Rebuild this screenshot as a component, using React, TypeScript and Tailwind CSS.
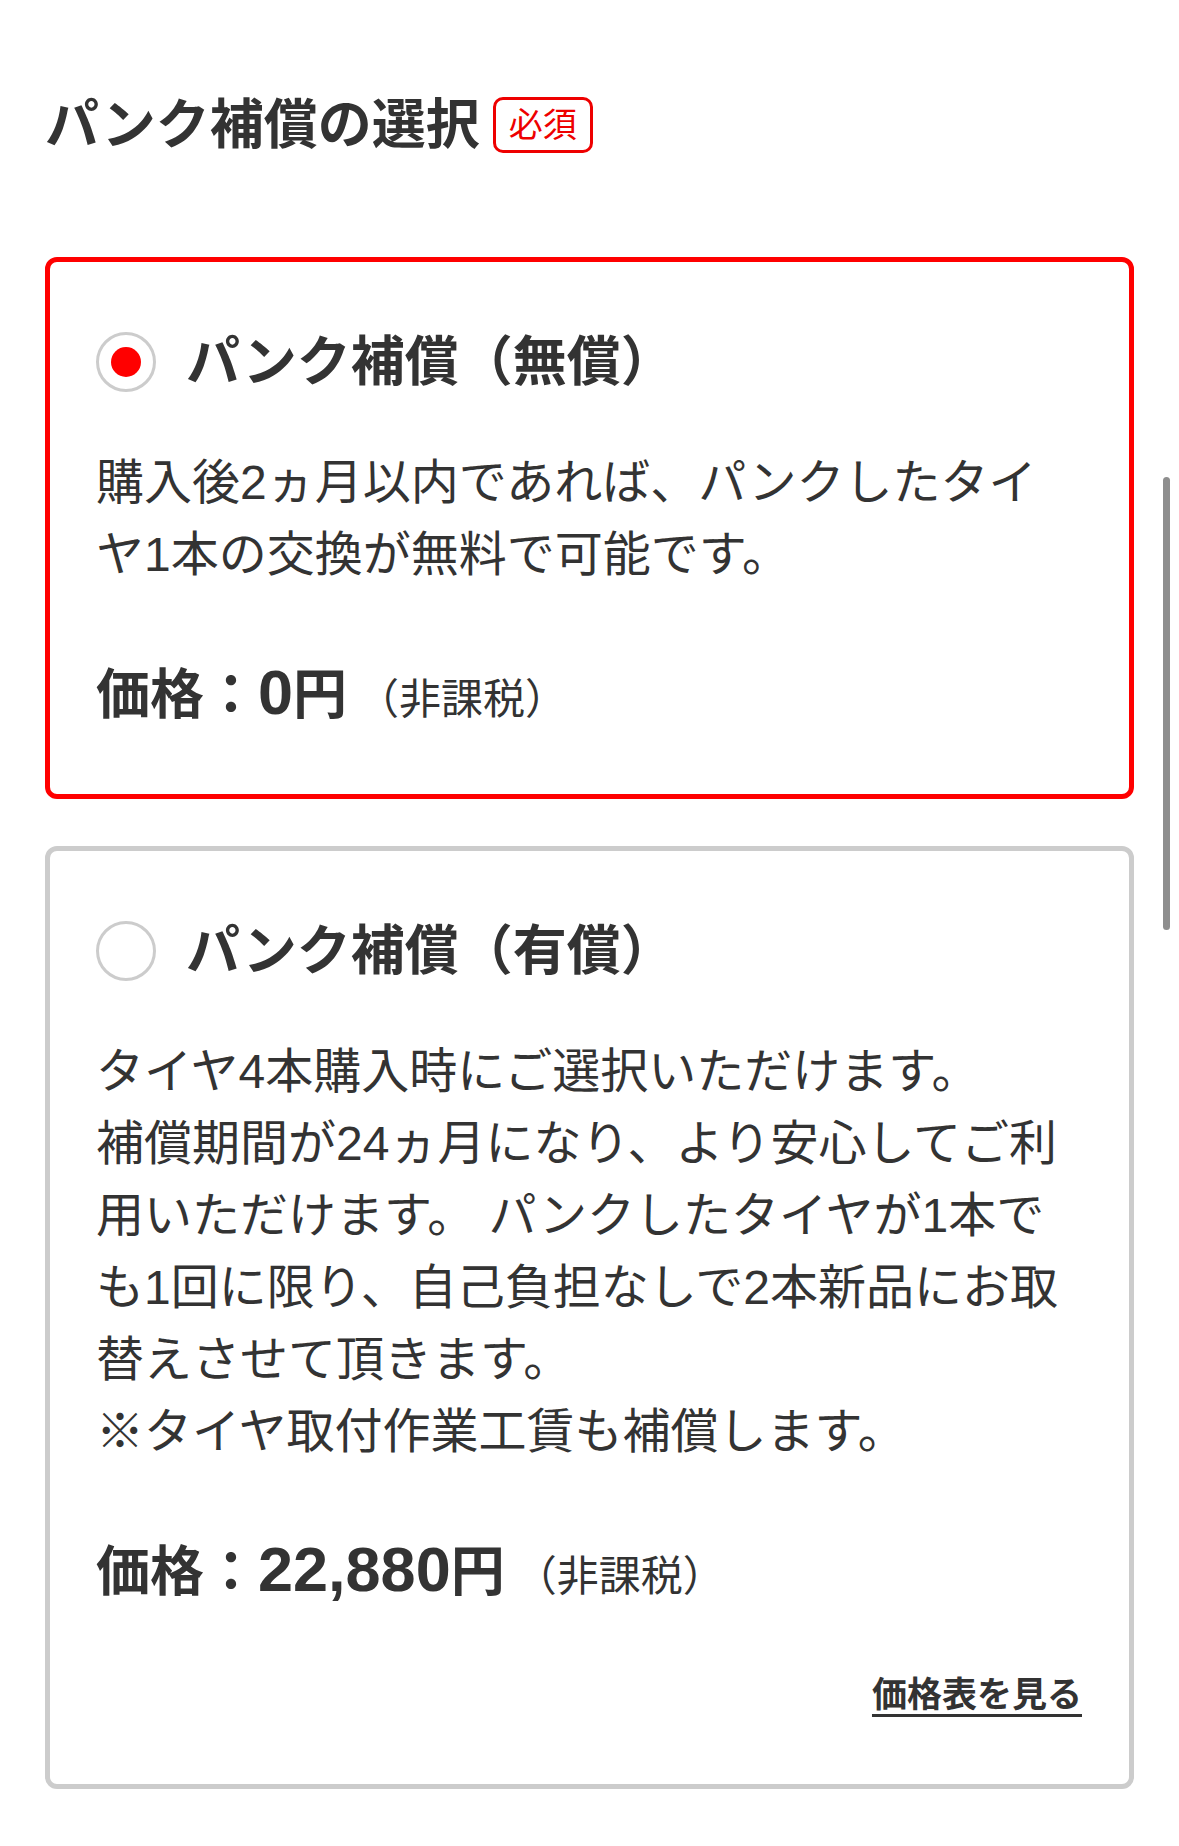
import React, { useState } from 'react';
import clsx from 'clsx';

interface Plan {
  id: string;
  title: string;
  lines: string[];
  price: string;
  showTable?: boolean;
}

const plans: Plan[] = [
  {
    id: 'free',
    title: 'パンク補償（無償）',
    lines: ['購入後2ヵ月以内であれば、パンクしたタイ', 'ヤ1本の交換が無料で可能です。'],
    price: '0',
  },
  {
    id: 'paid',
    title: 'パンク補償（有償）',
    lines: [
      'タイヤ4本購入時にご選択いただけます。',
      '補償期間が24ヵ月になり、より安心してご利',
      '用いただけます。 パンクしたタイヤが1本で',
      'も1回に限り、自己負担なしで2本新品にお取',
      '替えさせて頂きます。',
      '※タイヤ取付作業工賃も補償します。',
    ],
    price: '22,880',
    showTable: true,
  },
];

const PlanCard: React.FC<{ plan: Plan; selected: boolean; onSelect: () => void }> = ({ plan, selected, onSelect }) => {
  return (
    <div
      onClick={onSelect}
      className={clsx(
        'cursor-pointer rounded-[12px] border-[5px] bg-white pl-[46px] pr-[47px] pt-[70px]',
        selected ? 'border-[#f00]' : 'border-[#ccc]',
        plan.showTable ? 'pb-[65px]' : 'pb-[71px]'
      )}
    >
      <div className="flex h-[60px] items-center gap-[30px]">
        <span className="flex h-[60px] w-[60px] shrink-0 items-center justify-center rounded-full border-[3px] border-[#ccc] bg-white">
          {selected && <span className="h-[30px] w-[30px] rounded-full bg-[#f00]" />}
        </span>
        <span className="text-[54px] font-bold leading-none">{plan.title}</span>
      </div>

      <p className="mt-[55px] whitespace-nowrap text-[48px] leading-[72px]">
        {plan.lines.map((line, i) => (
          <React.Fragment key={i}>
            {line}
            {i < plan.lines.length - 1 && <br />}
          </React.Fragment>
        ))}
      </p>

      <p className="mt-[70px] h-[62px] whitespace-nowrap text-[54px] font-bold leading-[62px]">
        価格：<span className="text-[63px]">{plan.price}</span>円
        <span className="ml-[10px] text-[42px] font-normal">（非課税）</span>
      </p>

      {plan.showTable && (
        <div className="mt-[70px] flex h-[49px] justify-end">
          <a
            href="#"
            onClick={(e) => e.preventDefault()}
            className="text-[35px] font-bold leading-[49px] underline decoration-[3px] underline-offset-[7px]"
          >
            価格表を見る
          </a>
        </div>
      )}
    </div>
  );
};

const App: React.FC = () => {
  const [selected, setSelected] = useState<string>('free');

  return (
    <div className="relative min-h-screen bg-white px-[45px] pb-[56px] pt-[94px] font-['Liberation_Sans','Noto_Sans_CJK_JP',sans-serif] text-[#333]">
      <div className="flex h-[62px] items-center gap-[13px]">
        <h2 className="text-[54px] font-bold leading-none">パンク補償の選択</h2>
        <span className="flex h-[56px] w-[100px] items-center justify-center rounded-[10px] border-[3px] border-[#e00] text-[34px] leading-none text-[#e00]">
          必須
        </span>
      </div>

      <div className="mt-[101px] flex flex-col gap-[47px]">
        {plans.map((plan) => (
          <PlanCard key={plan.id} plan={plan} selected={selected === plan.id} onSelect={() => setSelected(plan.id)} />
        ))}
      </div>

      {/* scroll indicator */}
      <div className="absolute right-[9px] top-[477px] h-[453px] w-[7px] rounded-full bg-[#8e8e8e]" />
    </div>
  );
};

export default App;
